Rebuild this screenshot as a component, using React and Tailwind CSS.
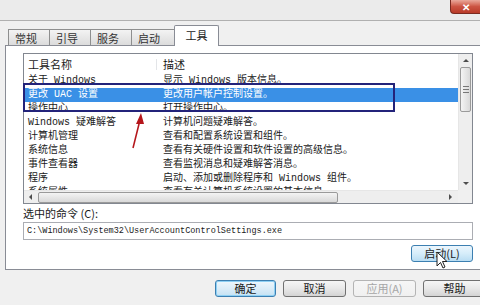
import React from 'react';

const rows = [
  ['关于 Windows', '显示 Windows 版本信息。'],
  ['更改 UAC 设置', '更改用户帐户控制设置。'],
  ['操作中心', '打开操作中心。'],
  ['Windows 疑难解答', '计算机问题疑难解答。'],
  ['计算机管理', '查看和配置系统设置和组件。'],
  ['系统信息', '查看有关硬件设置和软件设置的高级信息。'],
  ['事件查看器', '查看监视消息和疑难解答消息。'],
  ['程序', '启动、添加或删除程序和 Windows 组件。'],
  ['系统属性', '查看有关计算机系统设置的基本信息。'],
];

const tabs = ['常规', '引导', '服务', '启动'];

const Btn = ({ children, kind = 'normal', className = '' }) => {
  const look = {
    normal: 'border-[#707070] from-[#f6f6f6] via-[#e8e8e8] to-[#d4d4d4] text-[#1a1a1a]',
    default: 'border-[#3c7fb1] from-[#eef7fd] via-[#dcedf8] to-[#c5e2f4] text-[#1a1a1a] shadow-[inset_0_0_0_1px_#8ed0f4]',
    hover: 'border-[#3c7fb1] from-[#ecf6fd] via-[#d6edfa] to-[#b9ddf3] text-[#1a1a1a]',
    disabled: 'border-[#b4b4b4] from-[#f6f6f6] to-[#f0f0f0] text-[#a6a6a6]',
  }[kind];
  return (
    <div
      className={`flex h-[17px] items-center justify-center rounded-[3px] border bg-linear-to-b text-[11px] leading-none ${look} ${className}`}
    >
      {children}
    </div>
  );
};

const Arrow = ({ dir }) => {
  const pts = {
    up: '1,5 4,2 7,5',
    down: '1,2 4,5 7,2',
    left: '5,1 2,4 5,7',
    right: '2,1 5,4 2,7',
  }[dir];
  return (
    <svg width="8" height="8" viewBox="0 0 8 8">
      <polygon points={pts} fill="#4d4d4d" />
    </svg>
  );
};

export default function App() {
  return (
    <div className="relative h-[305px] w-[480px] overflow-hidden bg-[#f0f0f0] font-['Noto_Sans_CJK_SC',sans-serif] text-[#1a1a1a]">
      {/* title strip */}
      <div className="flex h-[21px] justify-end border-b border-[#b0b0b0] bg-[#ebebeb]">
        <div className="flex h-[14px] w-[30px] items-center justify-center rounded-bl-[4px] border border-t-0 border-r-0 border-[#7a2a20] bg-linear-to-b from-[#e9a89b] via-[#cc5443] to-[#b83a28] text-[10px] font-bold leading-none text-white">
          ✕
        </div>
      </div>

      {/* tabs */}
      <div className="relative z-10 flex h-[24px] items-end pl-[8px]">
        {tabs.map((t) => (
          <div
            key={t}
            className="-mr-px flex h-[16px] items-center border border-b-0 border-[#8e8f8f] bg-linear-to-b from-[#f3f3f3] to-[#dcdcdc] px-[6px] pt-[1px] text-[11px] leading-none text-[#333]"
            style={{ width: t === '启动' ? 44 : 42 }}
          >
            {t}
          </div>
        ))}
        <div className="-mb-px flex h-[21px] w-[45px] items-center justify-center rounded-t-[2px] border border-b-0 border-[#898c95] bg-white pb-[2px] text-[11px] leading-none">
          工具
        </div>
      </div>

      {/* tab panel */}
      <div className="ml-[5px] h-[225px] w-[480px] border border-[#898c95] bg-white pl-[17px] pt-[7px]">
        {/* list view */}
        <div className="flex h-[151px] w-[450px] flex-col border border-[#828790] bg-white">
          <div className="flex min-h-0 flex-1">
            <div className="flex min-w-0 flex-1 flex-col overflow-hidden">
              <div className="flex h-[20px] shrink-0 items-center text-[11px] leading-none">
                <div className="w-[133px] shrink-0 border-r border-[#e3e5e8] pl-[4px]">工具名称</div>
                <div className="pl-[6px]">描述</div>
              </div>
              <div className="font-['Liberation_Mono','Noto_Sans_CJK_SC',monospace] text-[10px]">
                {rows.map(([name, desc], i) => (
                  <div
                    key={name}
                    className={`flex h-[14px] items-center whitespace-nowrap leading-[14px] ${
                      i === 1 ? 'bg-[#3a90e6] text-white' : ''
                    }`}
                  >
                    <div className="w-[133px] shrink-0 pl-[4px]">{name}</div>
                    <div className="pl-[6px]">{desc}</div>
                  </div>
                ))}
              </div>
            </div>
            {/* vertical scrollbar */}
            <div className="flex w-[14px] shrink-0 flex-col border-l border-[#e6e6e6] bg-[#eeeeee]">
              <div className="flex h-[13px] items-center justify-center">
                <Arrow dir="up" />
              </div>
              <div className="mx-[1px] flex h-[45px] flex-col items-center justify-center gap-[2px] rounded-[2px] border border-[#9a9a9a] bg-linear-to-r from-[#f4f4f4] to-[#d9d9d9]">
                <div className="h-px w-[6px] bg-[#777]" />
                <div className="h-px w-[6px] bg-[#777]" />
                <div className="h-px w-[6px] bg-[#777]" />
              </div>
              <div className="flex-1" />
              <div className="flex h-[13px] items-center justify-center">
                <Arrow dir="down" />
              </div>
            </div>
          </div>
          {/* horizontal scrollbar */}
          <div className="flex h-[13px] shrink-0">
            <div className="flex flex-1 items-center border-t border-[#e6e6e6] bg-[#eeeeee]">
              <div className="flex w-[13px] items-center justify-center">
                <Arrow dir="left" />
              </div>
              <div className="ml-[1px] h-[11px] w-[300px] rounded-[2px] border border-[#9a9a9a] bg-linear-to-b from-[#f4f4f4] to-[#d9d9d9]" />
              <div className="flex-1" />
              <div className="flex w-[15px] items-center justify-center">
                <Arrow dir="right" />
              </div>
            </div>
            <div className="w-[14px] bg-[#f0f0f0]" />
          </div>
        </div>

        <div className="mt-[2px] h-[14px] text-[11px] leading-[14px]">选中的命令 (C):</div>
        <div className="mt-[2px] flex h-[18px] w-[450px] items-center border border-[#abadb3] pl-[3px] font-['Liberation_Mono',monospace] text-[8.5px]">
          C:\Windows\System32\UserAccountControlSettings.exe
        </div>
        <div className="mt-[5px] flex w-[450px] justify-end">
          <Btn kind="hover" className="w-[62px]">启动(L)</Btn>
        </div>
      </div>

      {/* dialog buttons */}
      <div className="mt-[10px] flex gap-[7px] pl-[215px]">
        <Btn kind="default" className="w-[61px] shrink-0">确定</Btn>
        <Btn className="w-[63px] shrink-0">取消</Btn>
        <Btn kind="disabled" className="w-[63px] shrink-0">应用(A)</Btn>
        <Btn className="w-[63px] shrink-0">帮助</Btn>
      </div>

      {/* annotation box */}
      <div className="pointer-events-none absolute left-[23px] top-[83px] h-[29px] w-[372px] border-2 border-[#23237a]" />

      {/* annotation arrow */}
      <svg className="pointer-events-none absolute left-[126px] top-[110px]" width="24" height="42" viewBox="0 0 24 42">
        <line x1="7" y1="38" x2="14" y2="10" stroke="#b5161b" strokeWidth="1.5" />
        <polygon points="15,3 10,14 18,14" fill="#b5161b" />
      </svg>

      {/* mouse cursor */}
      <svg className="pointer-events-none absolute left-[436px] top-[251px]" width="12" height="19" viewBox="0 0 12 19">
        <path d="M1 1 L1 15 L4.5 11.5 L7 17 L9 16 L6.5 10.5 L11 10.5 Z" fill="#fff" stroke="#222" strokeWidth="1" strokeLinejoin="round" />
      </svg>
    </div>
  );
}
